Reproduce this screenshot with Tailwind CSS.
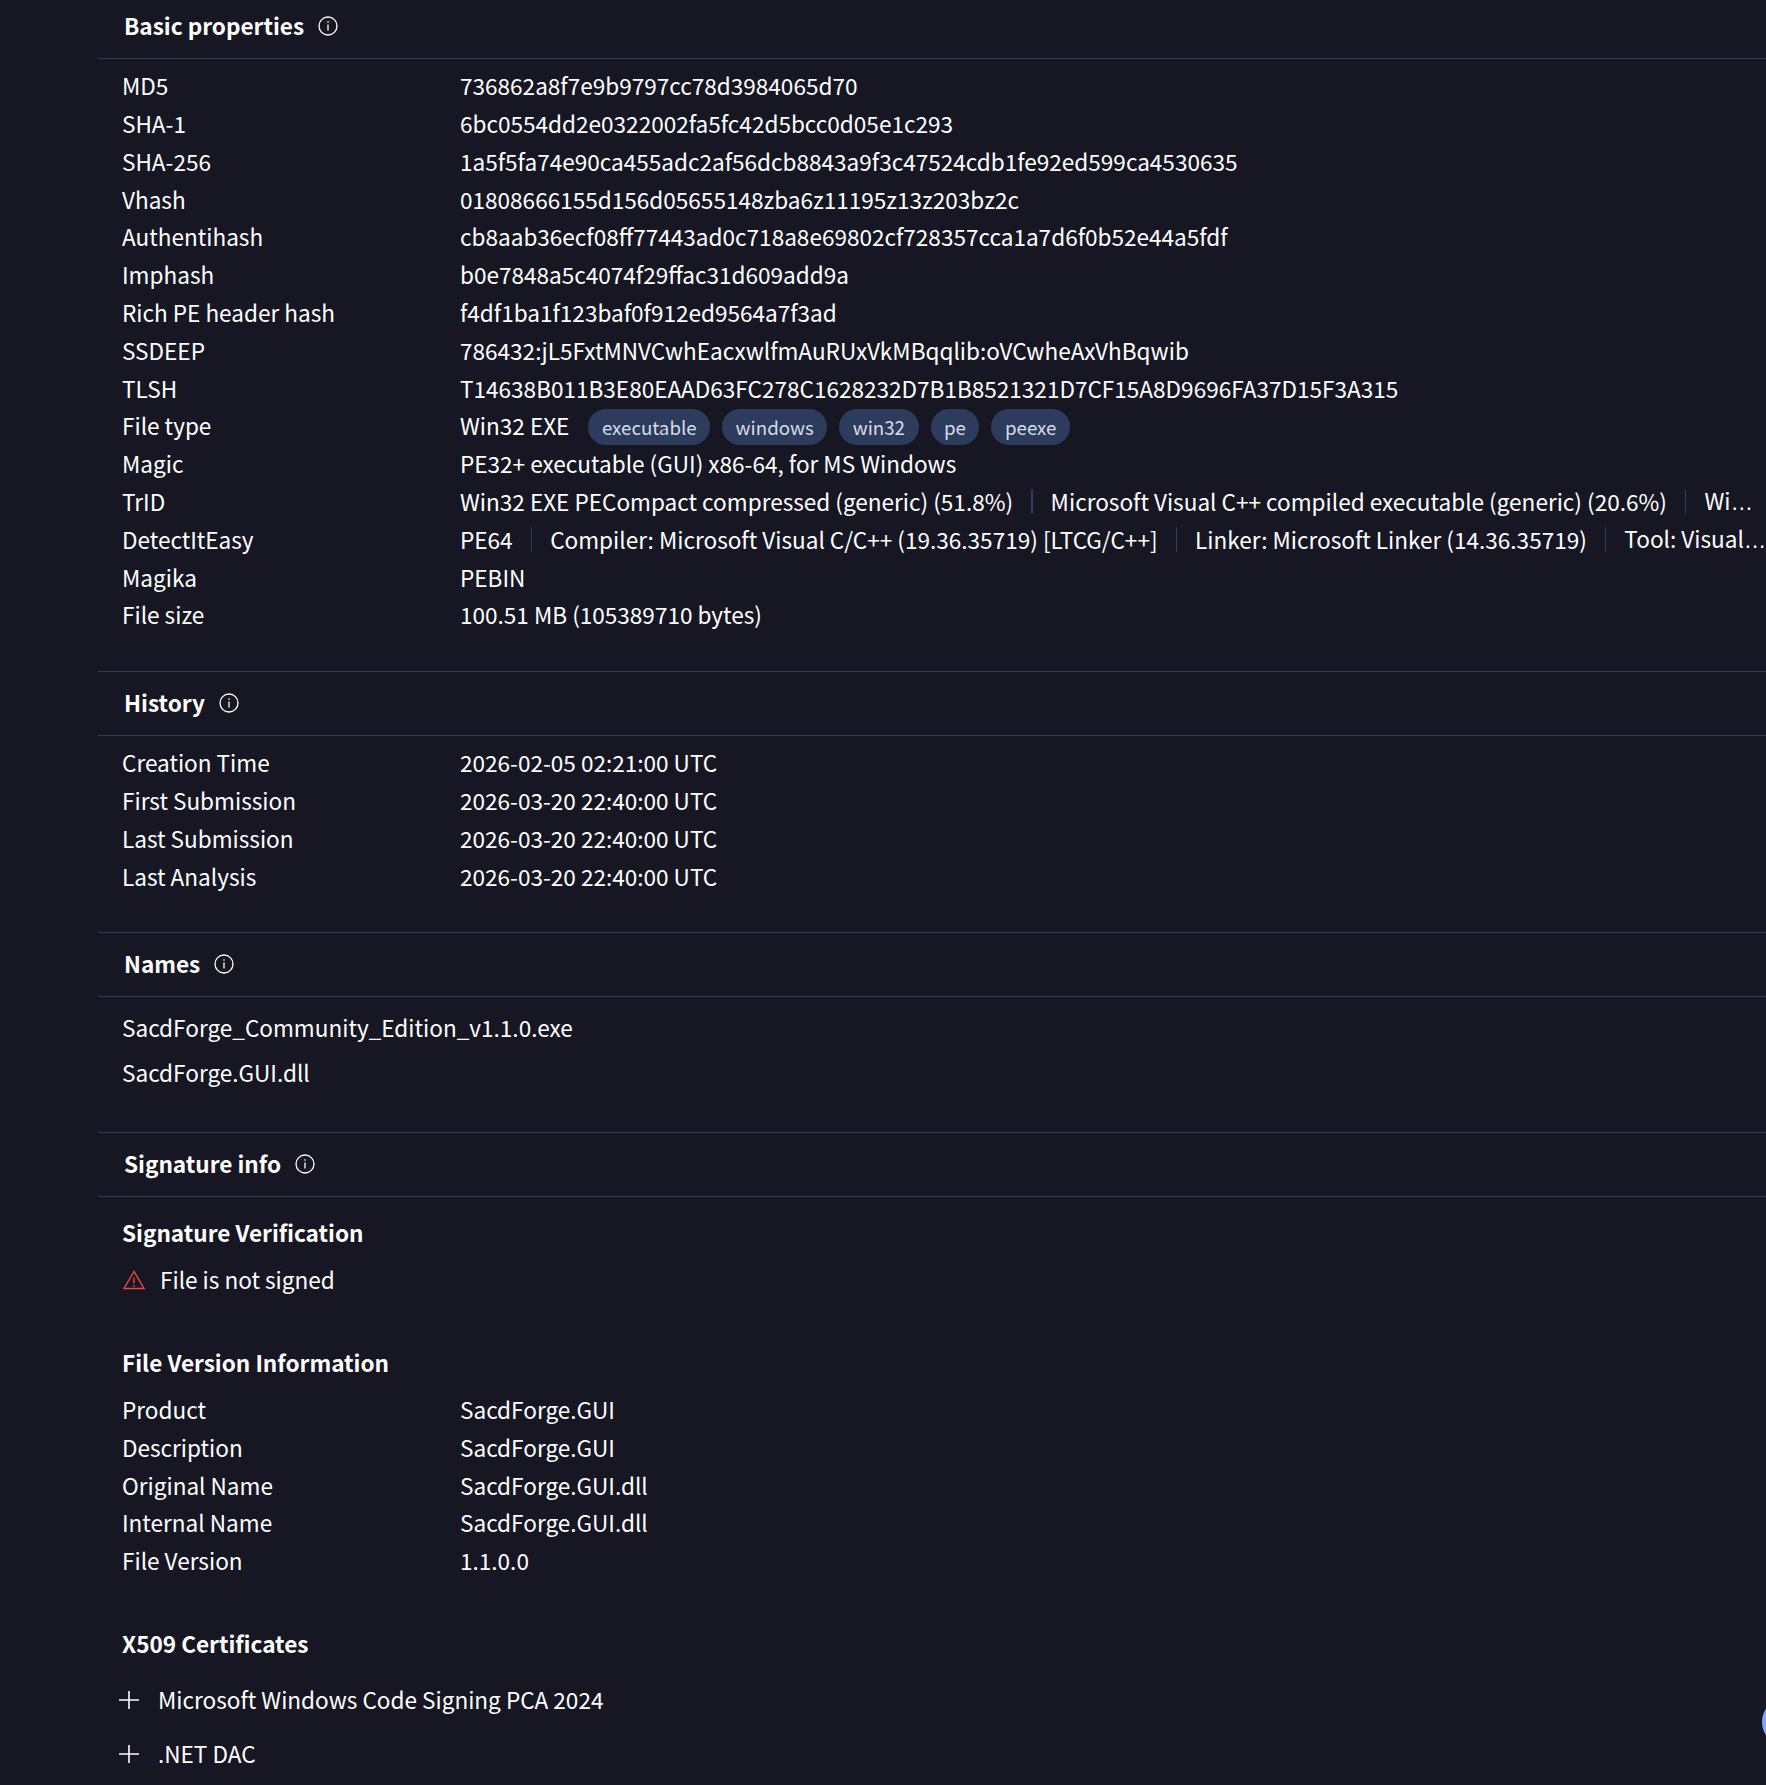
<!DOCTYPE html>
<html><head><meta charset="utf-8"><script src="https://cdn.jsdelivr.net/npm/@tailwindcss/browser@4"></script></head>
<body class="bg-[#171724]">
<div class="relative h-[1785px] w-[1766px] overflow-hidden bg-[#171724] pl-[98px] font-['Noto_Sans_CJK_JP','Noto_Sans_CJK_SC',sans-serif] text-[22.57px] text-white">

<section class="h-[672px] border-b border-[#2f3b5a]">
  <div class="flex h-[59px] items-center gap-[14px] border-b border-[#2f3b5a] pb-[6px] pl-[26px] font-bold"><span>Basic properties</span>
    <svg class="size-[20px]" viewBox="0 0 20 20" fill="none" stroke="currentColor" stroke-width="1.3"><circle cx="10" cy="10" r="9"/><path d="M10 8.6v6M10 5.2v1.5"/></svg></div>
  <div class="pl-[24px] pt-[8.3px]">
    <div class="flex h-[37.8px] items-center"><span class="w-[338px]">MD5</span><span>736862a8f7e9b9797cc78d3984065d70</span></div>
    <div class="flex h-[37.8px] items-center"><span class="w-[338px]">SHA-1</span><span>6bc0554dd2e0322002fa5fc42d5bcc0d05e1c293</span></div>
    <div class="flex h-[37.8px] items-center"><span class="w-[338px]">SHA-256</span><span>1a5f5fa74e90ca455adc2af56dcb8843a9f3c47524cdb1fe92ed599ca4530635</span></div>
    <div class="flex h-[37.8px] items-center"><span class="w-[338px]">Vhash</span><span>01808666155d156d05655148zba6z11195z13z203bz2c</span></div>
    <div class="flex h-[37.8px] items-center"><span class="w-[338px]">Authentihash</span><span>cb8aab36ecf08ff77443ad0c718a8e69802cf728357cca1a7d6f0b52e44a5fdf</span></div>
    <div class="flex h-[37.8px] items-center"><span class="w-[338px]">Imphash</span><span>b0e7848a5c4074f29ffac31d609add9a</span></div>
    <div class="flex h-[37.8px] items-center"><span class="w-[338px]">Rich PE header hash</span><span>f4df1ba1f123baf0f912ed9564a7f3ad</span></div>
    <div class="flex h-[37.8px] items-center"><span class="w-[338px]">SSDEEP</span><span>786432:jL5FxtMNVCwhEacxwlfmAuRUxVkMBqqlib:oVCwheAxVhBqwib</span></div>
    <div class="flex h-[37.8px] items-center"><span class="w-[338px]">TLSH</span><span>T14638B011B3E80EAAD63FC278C1628232D7B1B8521321D7CF15A8D9696FA37D15F3A315</span></div>
    <div class="flex h-[37.8px] items-center"><span class="w-[338px]">File type</span><span>Win32 EXE</span>
      <div class="ml-[19px] mt-[2px] flex gap-[12px] text-[18.7px] text-[#d5dceb]">
        <span class="flex h-[36px] items-center rounded-full bg-[#2d3b5c] px-[13.5px]">executable</span>
        <span class="flex h-[36px] items-center rounded-full bg-[#2d3b5c] px-[13.5px]">windows</span>
        <span class="flex h-[36px] items-center rounded-full bg-[#2d3b5c] px-[13.5px]">win32</span>
        <span class="flex h-[36px] items-center rounded-full bg-[#2d3b5c] px-[13.5px]">pe</span>
        <span class="flex h-[36px] items-center rounded-full bg-[#2d3b5c] px-[13.5px]">peexe</span>
      </div></div>
    <div class="flex h-[37.8px] items-center"><span class="w-[338px]">Magic</span><span>PE32+ executable (GUI) x86-64, for MS Windows</span></div>
    <div class="flex h-[37.8px] items-center"><span class="w-[338px] shrink-0">TrID</span>
      <div class="flex min-w-0 items-center whitespace-nowrap"><span>Win32 EXE PECompact compressed (generic) (51.8%)</span><span class="mx-[18px] h-[25px] w-[1.5px] shrink-0 bg-[#2f3b5a]"></span><span>Microsoft Visual C++ compiled executable (generic) (20.6%)</span><span class="mx-[18px] h-[25px] w-[1.5px] shrink-0 bg-[#2f3b5a]"></span><span>Wi<span class="font-['Liberation_Sans']">…</span></span></div></div>
    <div class="flex h-[37.8px] items-center"><span class="w-[338px] shrink-0">DetectItEasy</span>
      <div class="flex min-w-0 items-center whitespace-nowrap"><span>PE64</span><span class="mx-[18px] h-[25px] w-[1.5px] shrink-0 bg-[#2f3b5a]"></span><span>Compiler: Microsoft Visual C/C++ (19.36.35719) [LTCG/C++]</span><span class="mx-[18px] h-[25px] w-[1.5px] shrink-0 bg-[#2f3b5a]"></span><span>Linker: Microsoft Linker (14.36.35719)</span><span class="mx-[18px] h-[25px] w-[1.5px] shrink-0 bg-[#2f3b5a]"></span><span>Tool: Visual<span class="font-['Liberation_Sans']">…</span></span></div></div>
    <div class="flex h-[37.8px] items-center"><span class="w-[338px]">Magika</span><span>PEBIN</span></div>
    <div class="flex h-[37.8px] items-center"><span class="w-[338px]">File size</span><span>100.51 MB (105389710 bytes)</span></div>
  </div>
</section>

<section class="h-[261px] border-b border-[#2f3b5a]">
  <div class="flex h-[64px] items-center gap-[14px] border-b border-[#2f3b5a] pb-[1px] pl-[26px] font-bold"><span>History</span>
    <svg class="size-[20px]" viewBox="0 0 20 20" fill="none" stroke="currentColor" stroke-width="1.3"><circle cx="10" cy="10" r="9"/><path d="M10 8.6v6M10 5.2v1.5"/></svg></div>
  <div class="pl-[24px] pt-[8.2px]">
    <div class="flex h-[37.8px] items-center"><span class="w-[338px]">Creation Time</span><span>2026-02-05 02:21:00 UTC</span></div>
    <div class="flex h-[37.8px] items-center"><span class="w-[338px]">First Submission</span><span>2026-03-20 22:40:00 UTC</span></div>
    <div class="flex h-[37.8px] items-center"><span class="w-[338px]">Last Submission</span><span>2026-03-20 22:40:00 UTC</span></div>
    <div class="flex h-[37.8px] items-center"><span class="w-[338px]">Last Analysis</span><span>2026-03-20 22:40:00 UTC</span></div>
  </div>
</section>

<section class="h-[200px] border-b border-[#2f3b5a]">
  <div class="flex h-[64px] items-center gap-[14px] border-b border-[#2f3b5a] pb-[1px] pl-[26px] font-bold"><span>Names</span>
    <svg class="size-[20px]" viewBox="0 0 20 20" fill="none" stroke="currentColor" stroke-width="1.3"><circle cx="10" cy="10" r="9"/><path d="M10 8.6v6M10 5.2v1.5"/></svg></div>
  <div class="pl-[24px] pt-[8px]">
    <div class="flex h-[45px] items-center">SacdForge_Community_Edition_v1.1.0.exe</div>
    <div class="flex h-[45px] items-center">SacdForge.GUI.dll</div>
  </div>
</section>

<section>
  <div class="flex h-[64px] items-center gap-[14px] border-b border-[#2f3b5a] pb-[1px] pl-[26px] font-bold"><span>Signature info</span>
    <svg class="size-[20px]" viewBox="0 0 20 20" fill="none" stroke="currentColor" stroke-width="1.3"><circle cx="10" cy="10" r="9"/><path d="M10 8.6v6M10 5.2v1.5"/></svg></div>
  <div class="pl-[24px] pt-[17px]">
    <div class="flex h-[38px] items-center font-bold">Signature Verification</div>
    <div class="mt-[9px] flex h-[38px] items-center gap-[15px]">
      <svg class="ml-[1px] size-[22px] text-[#ef4444]" viewBox="0 0 22 20" fill="none" stroke="currentColor" stroke-width="1.4"><path d="M11 1.5 1 18.5h20z"/><path d="M11 7.5v6M11 15v1.4"/></svg>
      <span>File is not signed</span></div>
    <div class="mt-[45px] flex h-[38px] items-center font-bold">File Version Information</div>
    <div class="mt-[9px]">
      <div class="flex h-[37.8px] items-center"><span class="w-[338px]">Product</span><span>SacdForge.GUI</span></div>
      <div class="flex h-[37.8px] items-center"><span class="w-[338px]">Description</span><span>SacdForge.GUI</span></div>
      <div class="flex h-[37.8px] items-center"><span class="w-[338px]">Original Name</span><span>SacdForge.GUI.dll</span></div>
      <div class="flex h-[37.8px] items-center"><span class="w-[338px]">Internal Name</span><span>SacdForge.GUI.dll</span></div>
      <div class="flex h-[37.8px] items-center"><span class="w-[338px]">File Version</span><span>1.1.0.0</span></div>
    </div>
    <div class="mt-[45px] flex h-[38px] items-center font-bold">X509 Certificates</div>
    <div class="mt-[18px] flex h-[38px] items-center gap-[19px]">
      <svg class="-ml-[3px] size-[20px] shrink-0" viewBox="0 0 20 20" fill="none" stroke="currentColor" stroke-width="1.6"><path d="M10 1v18M0 10h20"/></svg><span>Microsoft Windows Code Signing PCA 2024</span></div>
    <div class="mt-[16px] flex h-[38px] items-center gap-[19px]">
      <svg class="-ml-[3px] size-[20px] shrink-0" viewBox="0 0 20 20" fill="none" stroke="currentColor" stroke-width="1.6"><path d="M10 1v18M0 10h20"/></svg><span>.NET DAC</span></div>
  </div>
</section>

<div class="absolute left-[1762px] top-[1698px] size-[48px] rounded-full bg-[#7fa6ff]"></div>
</div>
</body></html>
